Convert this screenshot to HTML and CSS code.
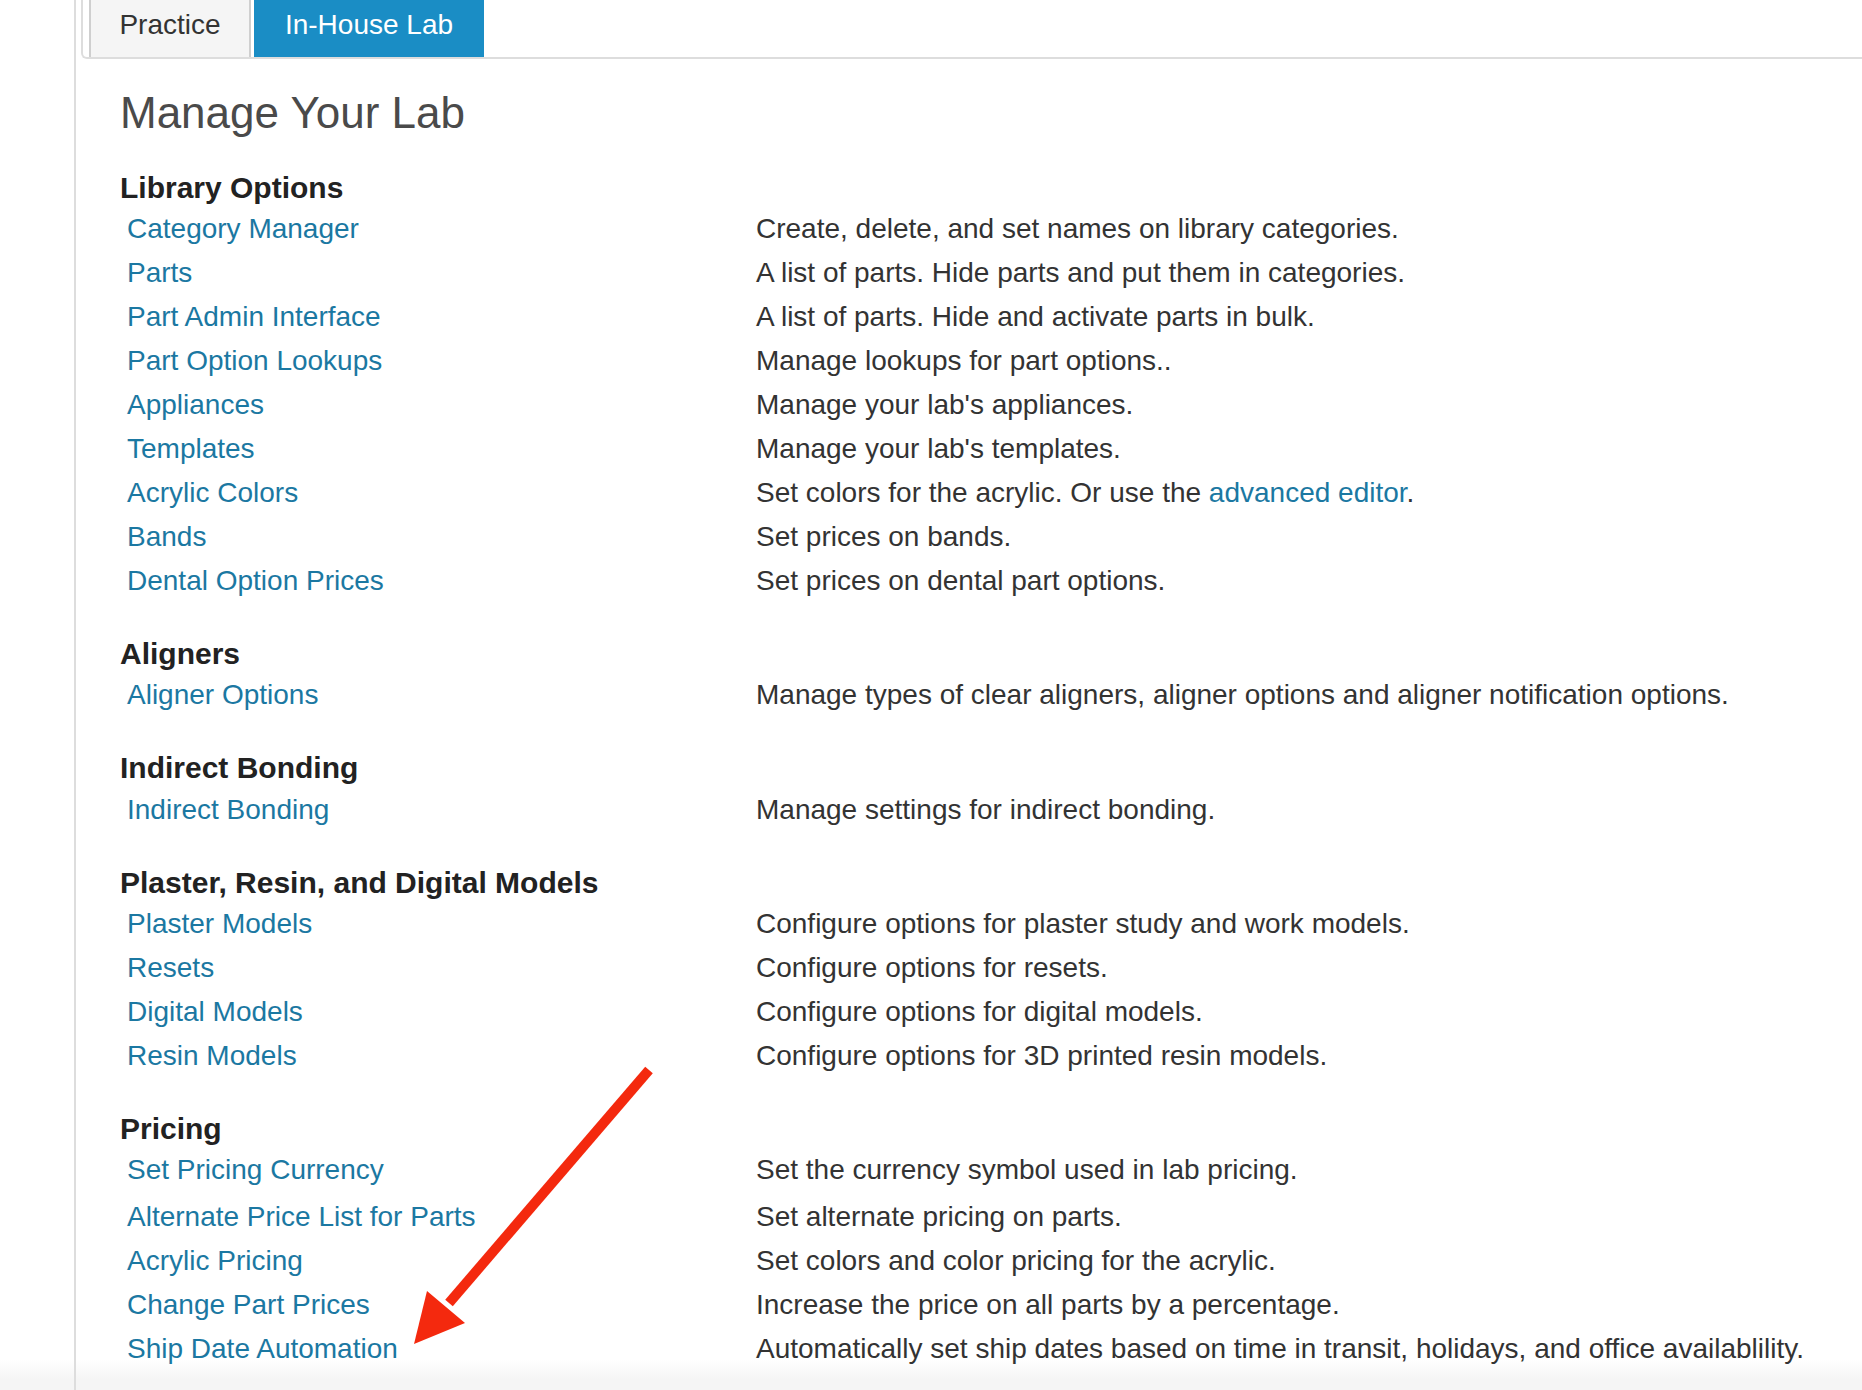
FILE: index.html
```html
<!DOCTYPE html>
<html lang="en">
<head>
  <meta charset="UTF-8" />
  <meta name="viewport" content="width=device-width, initial-scale=1.0" />
  <title>Manage Your Lab</title>
  <link rel="stylesheet" href="styles.css">
</head>
<body>
  <div class="page">
    <div class="gutter"></div>

    <div class="main">
      <nav class="tabs">
        <a class="tab" href="#">Practice</a>
        <a class="tab active" href="#">In-House Lab</a>
      </nav>

      <div class="content">
        <h1>Manage Your Lab</h1>

        <section class="group">
          <h2>Library Options</h2>
          <div class="row"><a href="#">Category Manager</a><span>Create, delete, and set names on library categories.</span></div>
          <div class="row"><a href="#">Parts</a><span>A list of parts. Hide parts and put them in categories.</span></div>
          <div class="row"><a href="#">Part Admin Interface</a><span>A list of parts. Hide and activate parts in bulk.</span></div>
          <div class="row"><a href="#">Part Option Lookups</a><span>Manage lookups for part options..</span></div>
          <div class="row"><a href="#">Appliances</a><span>Manage your lab's appliances.</span></div>
          <div class="row"><a href="#">Templates</a><span>Manage your lab's templates.</span></div>
          <div class="row"><a href="#">Acrylic Colors</a><span>Set colors for the acrylic. Or use the <a href="#">advanced editor</a>.</span></div>
          <div class="row"><a href="#">Bands</a><span>Set prices on bands.</span></div>
          <div class="row"><a href="#">Dental Option Prices</a><span>Set prices on dental part options.</span></div>
        </section>

        <section class="group">
          <h2>Aligners</h2>
          <div class="row"><a href="#">Aligner Options</a><span>Manage types of clear aligners, aligner options and aligner notification options.</span></div>
        </section>

        <section class="group">
          <h2>Indirect Bonding</h2>
          <div class="row"><a href="#">Indirect Bonding</a><span>Manage settings for indirect bonding.</span></div>
        </section>

        <section class="group">
          <h2>Plaster, Resin, and Digital Models</h2>
          <div class="row"><a href="#">Plaster Models</a><span>Configure options for plaster study and work models.</span></div>
          <div class="row"><a href="#">Resets</a><span>Configure options for resets.</span></div>
          <div class="row"><a href="#">Digital Models</a><span>Configure options for digital models.</span></div>
          <div class="row"><a href="#">Resin Models</a><span>Configure options for 3D printed resin models.</span></div>
        </section>

        <section class="group">
          <h2>Pricing</h2>
          <div class="row tall"><a href="#">Set Pricing Currency</a><span>Set the currency symbol used in lab pricing.</span></div>
          <div class="row"><a href="#">Alternate Price List for Parts</a><span>Set alternate pricing on parts.</span></div>
          <div class="row"><a href="#">Acrylic Pricing</a><span>Set colors and color pricing for the acrylic.</span></div>
          <div class="row"><a href="#">Change Part Prices</a><span>Increase the price on all parts by a percentage.</span></div>
          <div class="row"><a href="#">Ship Date Automation</a><span>Automatically set ship dates based on time in transit, holidays, and office availablility.</span></div>
        </section>
      </div>
    </div>
  </div>

  <!-- callout arrow drawn over the page -->
  <svg class="callout" width="1862" height="1390" viewBox="0 0 1862 1390">
    <line x1="649" y1="1070" x2="449" y2="1303" stroke="#f4290e" stroke-width="10" />
    <polygon points="414,1344 427,1291 465,1323" fill="#f4290e" />
  </svg>
</body>
</html>
```

FILE: styles.css
```css
:root {
  --link: #1b78a2;
  --tab-blue: #1a8dc5;
  --line: #dddddd;
  --text: #333333;
  --heading: #222222;
}

* {
  box-sizing: border-box;
}

body {
  margin: 0;
  position: relative;
  min-height: 100vh;
  font-family: 'Liberation Sans', Arial, sans-serif;
  color: var(--text);
  background: linear-gradient(#ffffff 1360px, #f5f5f5 1380px);
}

a {
  color: var(--link);
  text-decoration: none;
}

.page {
  display: flex;
  min-height: 100vh;
}

.gutter {
  width: 74px;
  flex-shrink: 0;
}

.main {
  flex: 1;
  border-left: 2px solid var(--line);
}

/* tabs */
.tabs {
  display: flex;
  gap: 3px;
  margin-left: 5px;
  padding-left: 6px;
  border-left: 2px solid var(--line);
  border-bottom: 2px solid var(--line);
  border-bottom-left-radius: 6px;
}

.tab {
  height: 57px;
  line-height: 50px;
  font-size: 28px;
  text-align: center;
  color: #333;
}

.tab:first-child {
  width: 162px;
  background-color: #f5f5f5;
  border-left: 2px solid #cfcfcf;
  border-right: 2px solid #cfcfcf;
}

.tab.active {
  width: 230px;
  background-color: var(--tab-blue);
  color: #fff;
}

/* content */
.content {
  padding-left: 44px;
}

h1 {
  margin: 29px 0 33px;
  font-size: 44px;
  line-height: 50px;
  font-weight: normal;
  color: #4a4a4a;
}

.group + .group {
  margin-top: 34px;
}

h2 {
  margin: 0 0 2.2px;
  font-size: 30px;
  line-height: 34px;
  font-weight: bold;
  color: var(--heading);
}

.row {
  display: grid;
  grid-template-columns: 636px 1fr;
  font-size: 28px;
  line-height: 44px;
}

.row > a {
  padding-left: 7px;
}

.row.tall {
  padding-bottom: 3px;
}

.callout {
  position: absolute;
  left: 0;
  top: 0;
  pointer-events: none;
}
```
